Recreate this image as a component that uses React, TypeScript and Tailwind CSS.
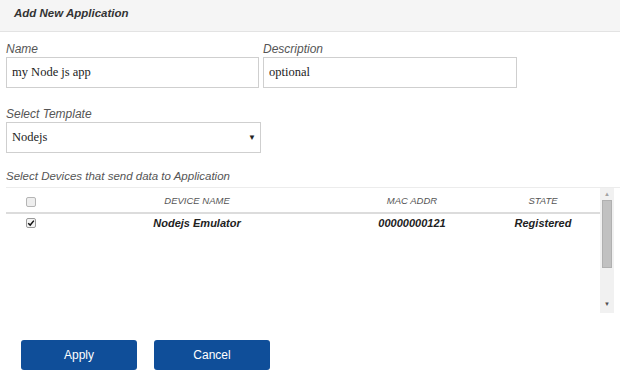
import React, { useState } from 'react';

const sans = { fontFamily: '"Liberation Sans", Arial, sans-serif' };
const serif = { fontFamily: '"Liberation Serif", "Times New Roman", serif' };

const devices = [{ name: 'Nodejs Emulator', mac: '00000000121', state: 'Registered', checked: true }];

const App: React.FC = () => {
  const [name, setName] = useState('my Node js app');
  const [description, setDescription] = useState('optional');

  return (
    <div className="w-[620px] h-[386px] bg-white overflow-hidden text-[#333]" style={sans}>
      {/* Header */}
      <div className="h-[32px] bg-[#f5f5f5] border-b border-[#e3e3e3] pl-[14px] pt-[5px]">
        <h1 className="text-[11.5px] leading-[16px] font-bold italic text-[#333]">Add New Application</h1>
      </div>

      {/* Form */}
      <div className="pl-[6px] pt-[10px]">
        <div className="flex gap-[4px]">
          <div className="w-[253px]">
            <label className="block text-[12px] leading-[14px] italic text-[#555] mb-[1px]">Name</label>
            <input
              value={name}
              onChange={(e) => setName(e.target.value)}
              className="w-full h-[31px] border border-[#cfcfcf] px-[5px] text-[12.5px] text-[#222] outline-none"
              style={serif}
            />
          </div>
          <div className="w-[254px]">
            <label className="block text-[12px] leading-[14px] italic text-[#555] mb-[1px]">Description</label>
            <input
              value={description}
              onChange={(e) => setDescription(e.target.value)}
              className="w-full h-[31px] border border-[#cfcfcf] px-[5px] text-[12.5px] text-[#222] outline-none"
              style={serif}
            />
          </div>
        </div>

        <div className="mt-[19px] w-[255px]">
          <label className="block text-[12px] leading-[14px] italic text-[#555] mb-[1px]">Select Template</label>
          <div className="h-[31px] border border-[#cfcfcf] flex items-center justify-between pl-[5px] pr-[4px]">
            <span className="text-[12.5px] text-[#222]" style={serif}>Nodejs</span>
            <span className="text-[8px] text-[#222]">▼</span>
          </div>
        </div>

        <div className="mt-[16px] text-[11.5px] leading-[14px] italic text-[#555]">
          Select Devices that send data to Application
        </div>

        {/* Devices table */}
        <div className="mt-[4px] h-[126px] flex border-t border-[#ececec]">
          <div className="flex-1">
            <div className="grid grid-cols-[50px_282px_148px_1fr] h-[26px] items-center border-b-2 border-[#dcdcdc] text-[9.5px] italic text-[#555] pt-[3px]">
              <div className="flex justify-center">
                <span className="w-[10px] h-[10px] border border-[#b5b5b5] bg-[#eeeeee] rounded-[2px]" />
              </div>
              <div className="text-center">DEVICE NAME</div>
              <div className="text-center">MAC ADDR</div>
              <div className="text-center">STATE</div>
            </div>
            {devices.map((d) => (
              <div key={d.mac} className="grid grid-cols-[50px_282px_148px_1fr] h-[18px] items-center text-[11px] font-bold italic text-[#222]">
                <div className="flex justify-center">
                  <span className="w-[10px] h-[10px] border border-[#9a9a9a] bg-[#f4f4f4] rounded-[2px] flex items-center justify-center">
                    {d.checked && (
                      <svg viewBox="0 0 10 10" className="w-[8px] h-[8px]">
                        <path d="M1.5 5.2 L4 7.6 L8.6 2" stroke="#111" strokeWidth="1.8" fill="none" />
                      </svg>
                    )}
                  </span>
                </div>
                <div className="text-center">{d.name}</div>
                <div className="text-center">{d.mac}</div>
                <div className="text-center">{d.state}</div>
              </div>
            ))}
          </div>

          {/* Scrollbar */}
          <div className="w-[14px] mr-[6px] bg-[#f1f1f1] flex flex-col items-center">
            <span className="text-[6px] leading-[10px] text-[#a3a3a3] mt-[1px]">▲</span>
            <div className="w-[10px] h-[68px] bg-[#c1c1c1] border border-[#b0b0b0] mt-[1px]" />
            <div className="flex-1" />
            <span className="text-[6px] leading-[10px] text-[#505050] mb-[4px]">▼</span>
          </div>
        </div>
      </div>

      {/* Actions */}
      <div className="flex gap-[17px] pl-[21px] mt-[27px]">
        <button className="w-[116px] h-[30px] bg-[#0f4e99] rounded-[3px] text-white text-[12px]">Apply</button>
        <button className="w-[116px] h-[30px] bg-[#0f4e99] rounded-[3px] text-white text-[12px]">Cancel</button>
      </div>
    </div>
  );
};

export default App;
